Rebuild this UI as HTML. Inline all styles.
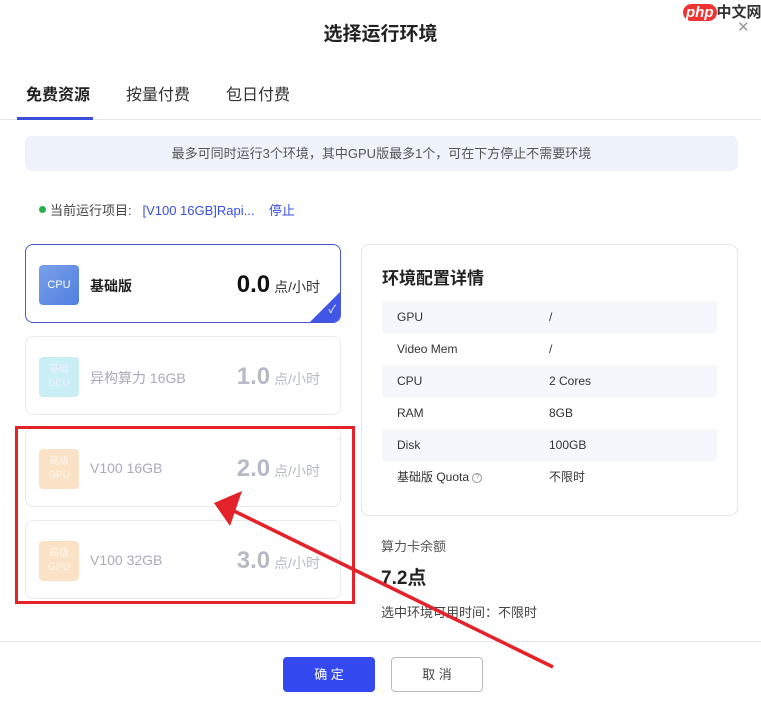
<!DOCTYPE html><html><head><meta charset="utf-8"><style>
*{margin:0;padding:0;box-sizing:border-box}
body{width:761px;height:702px;background:#fff;font-family:"Liberation Sans","Noto Sans CJK SC",sans-serif;position:relative;overflow:hidden;color:#222}
.a{position:absolute}
.card{position:absolute;left:25px;width:316px;height:79px;border:1px solid #e8eaf0;border-radius:8px;background:#fff}
.ic{position:absolute;left:13px;top:20px;width:40px;height:40px;border-radius:4px;color:#fff;font-size:10px;text-align:center;line-height:14px;display:flex;align-items:center;justify-content:center;flex-direction:column}
.nm{position:absolute;left:64px;top:31px;font-size:14px;color:#aab}
.pr{position:absolute;right:20px;top:26px;font-size:24px;font-weight:bold;color:#b6bac6}
.pr span{font-size:14px;font-weight:normal;margin-left:4px}
.row{position:absolute;left:382px;width:335px;height:32px;font-size:12px;color:#333;line-height:32px}
.row.s{background:#f5f7fc}
.row b{font-weight:normal;position:absolute;left:15px}
.row i{font-style:normal;position:absolute;left:167px}
</style></head><body>
<div class="a" style="left:0;top:19px;width:761px;text-align:center;font-size:19px;font-weight:bold;color:#222">选择运行环境</div>
<div class="a" style="left:683px;top:1px;font-size:15px;font-weight:bold;color:#333;white-space:nowrap"><span style="background:#e33;color:#fff;border-radius:9px;padding:0 3px;font-style:italic">php</span>中文网</div>
<div class="a" style="left:737px;top:18px;font-size:15px;color:#999">✕</div>
<div class="a" style="left:26px;top:81px;font-size:16px;font-weight:bold">免费资源</div>
<div class="a" style="left:126px;top:81px;font-size:16px;color:#333">按量付费</div>
<div class="a" style="left:226px;top:81px;font-size:16px;color:#333">包日付费</div>
<div class="a" style="left:0;top:119px;width:761px;height:1px;background:#e4e6ea"></div>
<div class="a" style="left:17px;top:117px;width:76px;height:3px;background:#3a4fd9"></div>
<div class="a" style="left:25px;top:136px;width:713px;height:35px;border-radius:7px;background:#eef2fb;text-align:center;line-height:35px;font-size:13px;color:#555">最多可同时运行3个环境，其中GPU版最多1个，可在下方停止不需要环境</div>
<div class="a" style="left:39px;top:206px;width:7px;height:7px;border-radius:50%;background:#22b14c"></div>
<div class="a" style="left:50px;top:200px;font-size:13px;color:#444">当前运行项目:&nbsp;&nbsp;&nbsp;<span style="color:#3a4fd9">[V100 16GB]Rapi...</span>&nbsp;&nbsp;&nbsp;&nbsp;<span style="color:#3a4fd9">停止</span></div>

<div class="card" style="top:244px;border-color:#4a56d6;overflow:hidden">
<div class="ic" style="background:linear-gradient(135deg,#7aa0e8,#4f7fe0);font-size:11px">CPU</div>
<div class="nm" style="color:#222;font-weight:bold">基础版</div>
<div class="pr" style="color:#111">0.0<span style="color:#333">点/小时</span></div>
<div class="a" style="right:0;bottom:0;width:0;height:0;border-left:30px solid transparent;border-bottom:30px solid #4156e6"></div>
<div class="a" style="right:4px;bottom:5px;color:#fff;font-size:11px">✓</div>
</div>
<div class="card" style="top:336px">
<div class="ic" style="background:#c9eef4;color:#eef"><span>基础</span><span>DCU</span></div>
<div class="nm">异构算力 16GB</div>
<div class="pr">1.0<span>点/小时</span></div>
</div>
<div class="card" style="top:428px">
<div class="ic" style="background:#fbe2c6;color:#fff6ea"><span>高级</span><span>GPU</span></div>
<div class="nm">V100 16GB</div>
<div class="pr">2.0<span>点/小时</span></div>
</div>
<div class="card" style="top:520px">
<div class="ic" style="background:#fbe2c6;color:#fff6ea"><span>高级</span><span>GPU</span></div>
<div class="nm">V100 32GB</div>
<div class="pr">3.0<span>点/小时</span></div>
</div>

<div class="a" style="left:361px;top:244px;width:377px;height:272px;border:1px solid #e4e6ea;border-radius:8px"></div>
<div class="a" style="left:382px;top:264px;font-size:17px;font-weight:bold">环境配置详情</div>
<div class="row s" style="top:301px"><b>GPU</b><i>/</i></div>
<div class="row" style="top:333px"><b>Video Mem</b><i>/</i></div>
<div class="row s" style="top:365px"><b>CPU</b><i>2 Cores</i></div>
<div class="row" style="top:397px"><b>RAM</b><i>8GB</i></div>
<div class="row s" style="top:429px"><b>Disk</b><i>100GB</i></div>
<div class="row" style="top:461px"><b>基础版 Quota <span style="display:inline-block;width:10px;height:10px;border:1px solid #999;border-radius:50%;font-size:7px;line-height:8px;text-align:center;color:#999;vertical-align:middle">?</span></b><i>不限时</i></div>
<div class="a" style="left:381px;top:536px;font-size:13px;color:#555">算力卡余额</div>
<div class="a" style="left:381px;top:563px;font-size:19px;font-weight:bold">7.2点</div>
<div class="a" style="left:381px;top:602px;font-size:13px;color:#444">选中环境可用时间：不限时</div>
<div class="a" style="left:0;top:641px;width:761px;height:1px;background:#e8e8ea"></div>
<div class="a" style="left:283px;top:657px;width:92px;height:35px;background:#3449f0;border-radius:4px;color:#fff;text-align:center;line-height:35px;font-size:13px">确 定</div>
<div class="a" style="left:391px;top:657px;width:92px;height:35px;border:1px solid #bbb;border-radius:4px;color:#444;text-align:center;line-height:33px;font-size:13px">取 消</div>
<div class="a" style="left:15px;top:426px;width:340px;height:178px;border:3px solid #e3222a"></div>
<svg class="a" style="left:0;top:0" width="761" height="702"><line x1="553" y1="667" x2="232" y2="510" stroke="#e3222a" stroke-width="3.5"/><polygon points="214,503 242,491 230,526" fill="#e3222a"/></svg>
</body></html>
